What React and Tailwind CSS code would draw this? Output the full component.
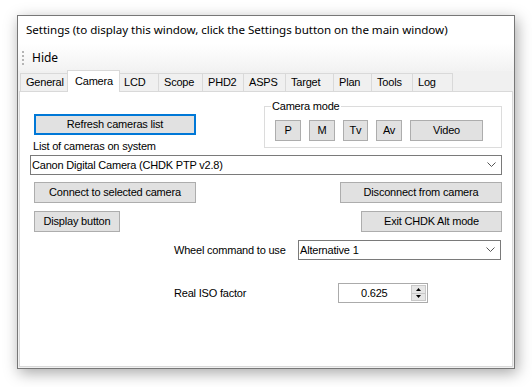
import React from "react";

const TABS = [
  { label: "General", w: 49 },
  { label: "Camera", w: 51, active: true },
  { label: "LCD", w: 41 },
  { label: "Scope", w: 45 },
  { label: "PHD2", w: 42 },
  { label: "ASPS", w: 43 },
  { label: "Target", w: 49 },
  { label: "Plan", w: 39 },
  { label: "Tools", w: 42 },
  { label: "Log", w: 41 },
];

const MODES = [
  { label: "P", w: 26 },
  { label: "M", w: 26 },
  { label: "Tv", w: 25 },
  { label: "Av", w: 26 },
  { label: "Video", w: 73 },
];

function Button({ children, className = "", focused }) {
  return (
    <div
      className={`flex h-[21px] items-center justify-center bg-[#e1e1e1] text-black ${
        focused ? "border-2 border-[#0078d7]" : "border border-[#adadad]"
      } ${className}`}
    >
      {children}
    </div>
  );
}

function Chevron() {
  return (
    <svg width="9" height="6" viewBox="0 0 9 6" className="shrink-0">
      <polyline points="0.5,0.5 4.5,4.5 8.5,0.5" fill="none" stroke="#555" strokeWidth="1" />
    </svg>
  );
}

function Combo({ value, className = "" }) {
  return (
    <div className={`flex h-[20px] items-center justify-between border border-[#7a7a7a] bg-white pl-[1px] pr-[5px] ${className}`}>
      <span>{value}</span>
      <Chevron />
    </div>
  );
}

export default function App() {
  return (
    <div className="min-h-[387px] bg-white pl-[17px] pt-[15px] font-['Liberation_Sans',Arial,sans-serif] text-[11px] tracking-[-0.2px] text-black">
      <div className="flex h-[354px] w-[498px] flex-col border border-[#777] bg-[#f0f0f0] shadow-[2px_4px_14px_rgba(0,0,0,0.35)]">
        {/* title bar */}
        <div className="flex h-[28px] items-center bg-white pl-[8px] font-['Noto_Sans',sans-serif] text-[11.6px] tracking-[-0.05px]">
          Settings (to display this window, click the Settings button on the main window)
        </div>

        {/* menu strip */}
        <div className="flex h-[27px] items-center bg-gradient-to-b from-white to-[#f2f2f2]">
          <div className="ml-[4px] flex flex-col gap-[2px]">
            {[0, 1, 2, 3].map((i) => (
              <div key={i} className="h-[2px] w-[2px] bg-[#b5b5b5]" />
            ))}
          </div>
          <span className="ml-[8px] font-['Noto_Sans',sans-serif] text-[12px] tracking-normal">Hide</span>
        </div>

        {/* tabs */}
        <div className="relative z-10 flex h-[20px] items-end pl-[2px]">
          {TABS.map((t, i) =>
            t.active ? (
              <div
                key={t.label}
                style={{ width: t.w + 2 }}
                className="relative z-10 -mb-px -ml-[2px] -mr-[1px] flex h-[22px] items-start border border-b-0 border-[#d9d9d9] bg-white pl-[7px] pt-[2px]"
              >
                {t.label}
              </div>
            ) : (
              <div
                key={t.label}
                style={{ width: t.w }}
                className={`flex h-[18px] items-center border border-b-0 border-[#d9d9d9] bg-[#f0f0f0] pl-[5px] ${i > 0 ? "-ml-px" : ""}`}
              >
                {t.label}
              </div>
            )
          )}
        </div>

        {/* tab page */}
        <div className="mx-px mb-px flex flex-1 flex-col border border-[#d9d9d9] bg-white">
          <div className="mt-[8px] flex items-start justify-between">
            <div className="flex flex-col pl-[14px] pt-[14px]">
              <Button focused className="w-[162px]">Refresh cameras list</Button>
              <div className="-ml-px mt-[5px] leading-[13px]">List of cameras on system</div>
            </div>
            <fieldset className="mr-[10px] h-[48px] w-[238px] border border-[#dcdcdc] pl-[10px]">
              <legend className="-ml-[4px] px-[1px] leading-[13px]">Camera mode</legend>
              <div className="mt-[7px] flex gap-[8px]">
                {MODES.map((m) => (
                  <Button key={m.label} className="h-[20px]">
                    <span style={{ width: m.w - 2 }} className="text-center">{m.label}</span>
                  </Button>
                ))}
              </div>
            </fieldset>
          </div>

          <Combo value="Canon Digital Camera (CHDK PTP v2.8)" className="mx-[10px] mt-[2px]" />

          <div className="mt-[7px] flex justify-between pl-[14px] pr-[10px]">
            <Button className="w-[162px]">Connect to selected camera</Button>
            <Button className="w-[162px]">Disconnect from camera</Button>
          </div>

          <div className="mt-[8px] flex justify-between pl-[14px] pr-[10px]">
            <Button className="w-[86px]">Display button</Button>
            <Button className="w-[141px]">Exit CHDK Alt mode</Button>
          </div>

          <div className="mt-[8px] flex items-center pl-[154px] pr-[11px]">
            <span className="w-[124px]">Wheel command to use</span>
            <Combo value="Alternative 1" className="flex-1" />
          </div>

          <div className="mt-[23px] flex items-center pl-[154px]">
            <span className="w-[164px]">Real ISO factor</span>
            <div className="flex h-[20px] w-[90px] items-center border border-[#ababab] bg-white pr-px">
              <span className="flex-1 pl-[22px]">0.625</span>
              <div className="flex h-[16px] w-[15px] flex-col border border-[#c8c8c8]">
                <div className="flex flex-1 items-center justify-center bg-[#e6e6e6]">
                  <svg width="5" height="3" viewBox="0 0 5 3"><polygon points="2.5,0 5,3 0,3" fill="#000" /></svg>
                </div>
                <div className="h-px bg-[#c8c8c8]" />
                <div className="flex flex-1 items-center justify-center bg-[#e6e6e6]">
                  <svg width="5" height="3" viewBox="0 0 5 3"><polygon points="0,0 5,0 2.5,3" fill="#000" /></svg>
                </div>
              </div>
            </div>
          </div>
        </div>
      </div>
    </div>
  );
}
